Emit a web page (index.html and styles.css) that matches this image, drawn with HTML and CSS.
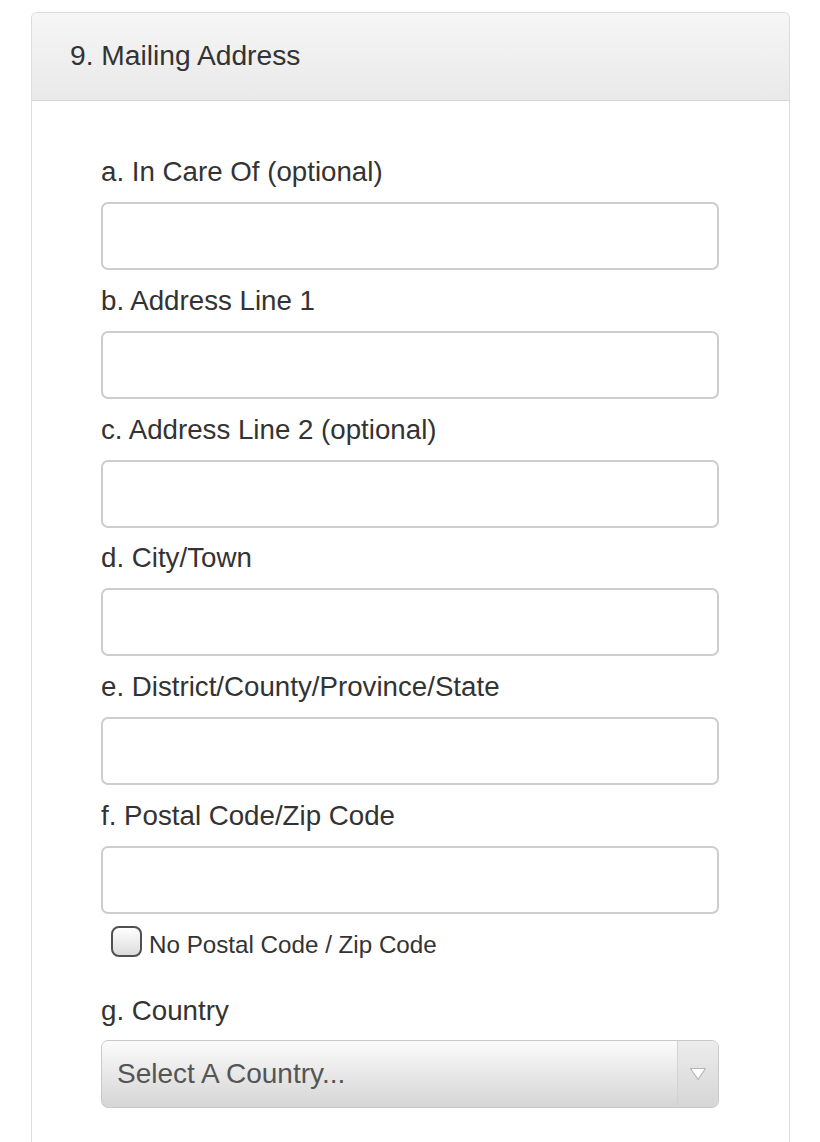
FILE: index.html
```html
<!DOCTYPE html>
<html lang="en">
<head>
<meta charset="utf-8">
<title>Mailing Address</title>
<link rel="stylesheet" href="styles.css">
</head>
<body>
<section class="panel">
  <header class="panel-head">9. Mailing Address</header>
  <div class="panel-body">
    <label class="field-label" for="f-a">a. In Care Of (optional)</label>
    <input class="text-input" id="f-a" type="text">
    <label class="field-label" for="f-b">b. Address Line 1</label>
    <input class="text-input" id="f-b" type="text">
    <label class="field-label" for="f-c">c. Address Line 2 (optional)</label>
    <input class="text-input" id="f-c" type="text">
    <label class="field-label" for="f-d">d. City/Town</label>
    <input class="text-input" id="f-d" type="text">
    <label class="field-label" for="f-e">e. District/County/Province/State</label>
    <input class="text-input" id="f-e" type="text">
    <label class="field-label" for="f-f">f. Postal Code/Zip Code</label>
    <input class="text-input input-last" id="f-f" type="text">
    <label class="check-row">
      <input class="check" type="checkbox">
      <span class="check-text">No Postal Code / Zip Code</span>
    </label>
    <label class="field-label label-country" for="f-g">g. Country</label>
    <div class="select-box">
      <select class="select" id="f-g">
        <option>Select A Country...</option>
      </select>
      <span class="select-arrow">
        <svg width="18" height="14" viewBox="0 0 18 14">
          <path d="M1.5 1.5 L16.5 1.5 L9 12.5 Z" fill="#ffffff" stroke="#b5b5b5" stroke-width="1.2" stroke-linejoin="round"/>
        </svg>
      </span>
    </div>
  </div>
</section>
</body>
</html>
```
FILE: styles.css
```css
html, body {
  margin: 0;
  padding: 0;
  background: #ffffff;
}

body {
  font-family: "Liberation Sans", Arial, sans-serif;
  color: #333333;
}

.panel {
  box-sizing: border-box;
  width: 759px;
  margin: 12px 0 0 31px;
  border: 1px solid #dcdcdc;
  border-bottom: none;
  border-radius: 6px 6px 0 0;
  overflow: hidden;
}

.panel-head {
  box-sizing: border-box;
  height: 88px;
  display: flex;
  align-items: center;
  padding: 0 0 2px 38px;
  font-size: 28.2px;
  color: #333333;
  background: linear-gradient(#f6f6f6, #e9e9e9);
  border-bottom: 1px solid #d6d6d6;
}

.panel-body {
  display: flex;
  flex-direction: column;
  padding: 55px 70px 60px 69px;
}

.field-label {
  display: block;
  font-size: 27.7px;
  line-height: 31px;
  color: #333333;
  margin: 0 0 15px 0;
}

.text-input {
  box-sizing: border-box;
  display: block;
  width: 100%;
  height: 68px;
  margin: 0 0 14.8px 0;
  border: 2px solid #cdcdcd;
  border-radius: 7px;
  background: #ffffff;
  font-size: 26px;
  font-family: inherit;
  padding: 0 14px;
  outline: none;
}

.input-last {
  margin-bottom: 12px;
}

.check-row {
  display: flex;
  align-items: center;
  margin: 0 0 37px 10px;
  height: 32px;
}

.check {
  appearance: none;
  -webkit-appearance: none;
  box-sizing: border-box;
  width: 31px;
  height: 31px;
  margin: 0;
  border: 2px solid #505050;
  border-radius: 8px;
  background: linear-gradient(#ffffff, #dcdcdc);
  flex: none;
}

.check-text {
  font-size: 24.2px;
  color: #333333;
  margin-left: 7px;
  padding-top: 6px;
}

.label-country {
  margin-bottom: 14px;
}

.select-box {
  box-sizing: border-box;
  display: flex;
  height: 68px;
  border: 1px solid #c9c9c9;
  border-radius: 7px;
  background: linear-gradient(#fbfbfb, #d5d5d5);
  overflow: hidden;
}

.select {
  appearance: none;
  -webkit-appearance: none;
  flex: 1;
  border: none;
  background: transparent;
  font-family: inherit;
  font-size: 28px;
  color: #555555;
  padding: 0 0 0 15px;
  margin: 0;
  outline: none;
}

.select-arrow {
  flex: none;
  width: 40px;
  display: flex;
  align-items: center;
  justify-content: center;
  border-left: 1px solid #d2d2d2;
  background: linear-gradient(#ececec, #d6d6d6);
}
```
